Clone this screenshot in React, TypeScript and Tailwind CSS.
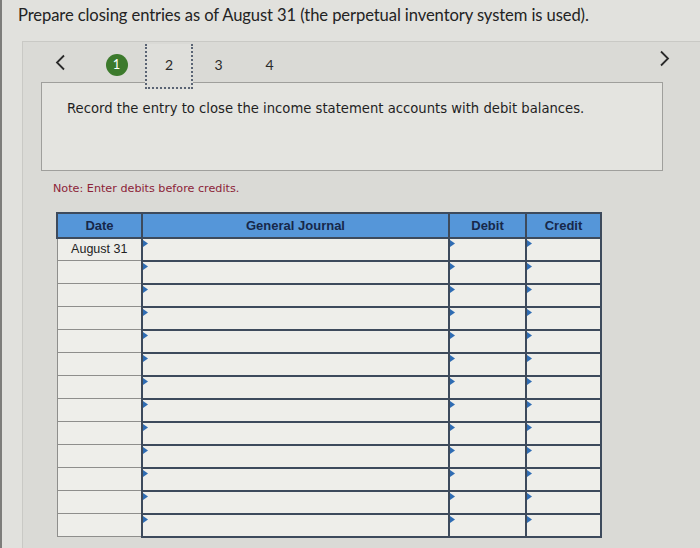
import React from "react"

const ROWS = 13

function Marker() {
  return (
    <svg className="absolute left-0 top-[1px]" width="5" height="7" viewBox="0 0 5 7">
      <path d="M0 0 L5 3.5 L0 7 Z" fill="#2f6cb3" />
    </svg>
  )
}

function Chevron({ dir }: { dir: "left" | "right" }) {
  return (
    <svg width="11" height="17" viewBox="0 0 11 17">
      <path
        d={dir === "left" ? "M9 1.5 L2 8.5 L9 15.5" : "M2 1.5 L9 8.5 L2 15.5"}
        fill="none"
        stroke="#2a2a2a"
        strokeWidth="1.8"
      />
    </svg>
  )
}

export default function App() {
  return (
    <div className="w-[700px] h-[548px] overflow-hidden bg-[#e1e1dd] border-l-2 border-[#7d7d7a] font-['Lato',sans-serif]">
      {/* Title */}
      <h1 className="pl-[16px] pt-[3px] h-[41px] text-[16.6px] text-[#232323] tracking-[-0.1px]">
        Prepare closing entries as of August 31 (the perpetual inventory system is used).
      </h1>

      {/* Panel */}
      <div className="ml-[20px] h-[520px] bg-[#dadad6] border-t border-l border-[#c9c9c5]">
        {/* Tabs */}
        <div className="flex items-start h-[40px] text-[14px] text-[#2a2a2a]">
          <div className="ml-[32px] mt-[12px] w-[12px]">
            <Chevron dir="left" />
          </div>
          <div className="ml-[24px] w-[51px] flex justify-center pt-[12px]">
            <div className="w-[22px] h-[22px] rounded-full bg-[#3c7a2c] text-white text-[13px] flex items-center justify-center">
              1
            </div>
          </div>
          <div className="relative z-10 ml-[3px] mt-[2px] w-[48px] h-[45px] bg-[#dfdfdb] border-x-2 border-b-2 border-dotted border-[#5a6474] flex justify-center pt-[10px]">
            2
          </div>
          <div className="w-[51px] flex justify-center pt-[12px]">3</div>
          <div className="w-[51px] flex justify-center pt-[12px]">4</div>
          <div className="ml-auto mr-[30px] mt-[8px]">
            <Chevron dir="right" />
          </div>
        </div>

        {/* Instruction box */}
        <div className="ml-[18px] w-[622px] h-[89px] border border-[#9f9f9c] bg-[#e4e4e0] pl-[25px] pt-[16px] font-['DejaVu_Sans',sans-serif] text-[13.2px] text-[#1f1f1f]">
          Record the entry to close the income statement accounts with debit balances.
        </div>

        {/* Note */}
        <p className="ml-[30px] mt-[10px] font-['DejaVu_Sans',sans-serif] text-[11.2px] text-[#8c2338]">
          Note: Enter debits before credits.
        </p>

        {/* Journal table */}
        <table className="ml-[33px] mt-[14px] border-collapse font-['Liberation_Sans',sans-serif] text-[13px]">
          <thead>
            <tr className="h-[25px] bg-[#5596d9] text-[#17284a]">
              <th className="w-[85px] border-2 border-[#3d4a5c] font-bold">Date</th>
              <th className="w-[307px] border-2 border-[#3d4a5c] font-bold">General Journal</th>
              <th className="w-[77px] border-2 border-[#3d4a5c] font-bold">Debit</th>
              <th className="w-[75px] border-2 border-[#3d4a5c] font-bold">Credit</th>
            </tr>
          </thead>
          <tbody>
            {Array.from({ length: ROWS }).map((_, i) => (
              <tr key={i} className="h-[23px] bg-[#eeeeea]">
                <td className="border border-[#8e8e8c] border-r-2 border-r-[#3d4a5c] text-center text-[12.5px] text-[#222]">
                  {i === 0 ? "August 31" : ""}
                </td>
                <td className="relative border-2 border-[#3d4a5c]">
                  <Marker />
                </td>
                <td className="relative border-2 border-[#3d4a5c]">
                  <Marker />
                </td>
                <td className="relative border-2 border-[#3d4a5c]">
                  <Marker />
                </td>
              </tr>
            ))}
          </tbody>
        </table>
      </div>
    </div>
  )
}
